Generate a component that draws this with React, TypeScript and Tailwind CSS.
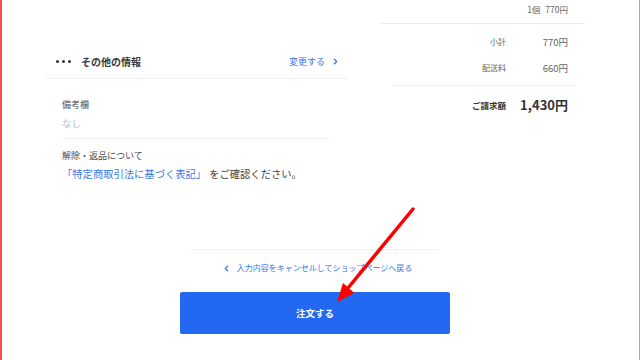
import { ChevronLeft, ChevronRight } from "lucide-react";

const PRICE_ROWS = [
  { label: "小計", value: "770円" },
  { label: "配送料", value: "660円" },
];

export default function App() {
  return (
    <div className="relative w-[640px] h-[360px] overflow-hidden bg-white border-l-2 border-r border-l-[#ff4b4b] border-r-[#f28a8a] font-['Noto_Sans_CJK_JP','Noto_Sans',sans-serif]">
      <div className="flex h-[249px] ml-[43px] w-[540px]">
        {/* Left: other info */}
        <div className="w-[303px] pt-[45px]">
          <div className="flex items-center justify-between h-[34px] border-b border-[#f0f0f0] pl-[11px] pr-[8px]">
            <div className="flex items-center">
              <div className="flex gap-[3px]">
                <span className="w-[3px] h-[3px] rounded-full bg-[#333]" />
                <span className="w-[3px] h-[3px] rounded-full bg-[#333]" />
                <span className="w-[3px] h-[3px] rounded-full bg-[#333]" />
              </div>
              <span className="ml-[10px] text-[10px] font-bold text-[#3a3a3a] leading-none">その他の情報</span>
            </div>
            <div className="flex items-center text-[#3877e8]">
              <span className="text-[9px] leading-none">変更する</span>
              <ChevronRight size={9} strokeWidth={3.5} className="ml-[6px]" />
            </div>
          </div>

          <div className="pl-[17px] pr-[18px]">
            <div className="pt-[19px] pb-[8px] border-b border-[#f0f0f0]">
              <div className="text-[9px] text-[#555] leading-[14px]">備考欄</div>
              <div className="mt-[4px] text-[9.5px] text-[#b5b5b5] leading-[14px]">なし</div>
            </div>
            <div className="pt-[10px]">
              <div className="text-[9px] text-[#4a4a4a] leading-[14px]">解除・返品について</div>
              <div className="mt-[3px] text-[10.3px] leading-[16px]">
                <span className="text-[#3877e8]">「特定商取引法に基づく表記」</span>
                <span className="text-[#444] ml-[3px]">をご確認ください。</span>
              </div>
            </div>
          </div>
        </div>

        {/* Right: totals */}
        <div className="w-[205px] ml-[32px]">
          <div className="h-[24px] border-b border-[#ececec] flex items-center justify-end pr-[17px] pb-[4px] text-[8.5px] text-[#666]">
            <span>1個</span>
            <span className="ml-[5px]">770円</span>
          </div>
          <div className="pt-[5px]">
            {PRICE_ROWS.map((r) => (
              <div key={r.label} className="h-[26px] flex items-center justify-end pr-[17px]">
                <span className="text-[8px] text-[#666]">{r.label}</span>
                <span className="w-[62px] text-right text-[9.5px] text-[#666]">{r.value}</span>
              </div>
            ))}
          </div>
          <div className="ml-[12px] mr-[9px] border-b border-[#f0f0f0] mt-[4px]" />
          <div className="h-[38px] flex items-center justify-end pr-[17px]">
            <span className="text-[8.5px] font-bold text-[#333]">ご請求額</span>
            <span className="w-[62px] text-right text-[13px] font-bold text-[#333]">1,430円</span>
          </div>
        </div>
      </div>

      {/* Bottom actions */}
      <div className="ml-[178px] w-[270px] flex flex-col items-center">
        <div className="w-[248px] border-t border-[#f2f2f2]" />
        <div className="h-[36px] flex items-center text-[#3877e8] ml-[4px]">
          <ChevronLeft size={9} strokeWidth={3.5} />
          <span className="ml-[6px] text-[8px] leading-none">入力内容をキャンセルしてショップページへ戻る</span>
        </div>
        <button className="mt-[6px] w-[270px] h-[42px] rounded-[2px] bg-[#2368f0] text-white text-[9.5px] font-bold flex items-center justify-center">
          注文する
        </button>
      </div>

      {/* Annotation arrow */}
      <svg className="absolute left-0 top-0 pointer-events-none" width="640" height="360" viewBox="0 0 640 360">
        <line x1="411" y1="209" x2="346" y2="288" stroke="#ff0000" strokeWidth="3.5" strokeLinecap="round" />
        <polygon points="335,302 352.5,293 341,283" fill="#ff0000" />
      </svg>
    </div>
  );
}
